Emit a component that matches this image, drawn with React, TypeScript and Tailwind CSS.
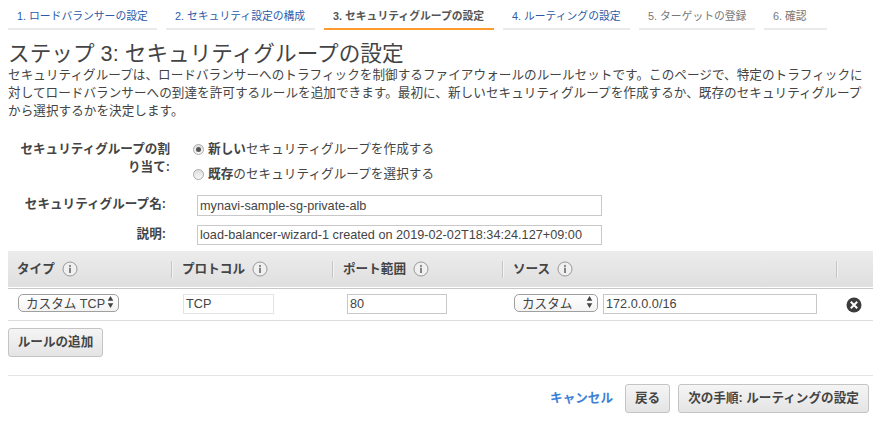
import type { ReactNode } from 'react';

const steps = [
  { label: '1. ロードバランサーの設定', box: 'w-[149px] border-[#eaeaea] text-[#2a5aa8]' },
  { label: '2. セキュリティ設定の構成', box: 'w-[149px] border-[#eaeaea] text-[#2a5aa8]' },
  { label: '3. セキュリティグループの設定', box: 'w-[170px] border-[#ff9a2e] font-bold text-[#555]' },
  { label: '4. ルーティングの設定', box: 'w-[127px] border-[#eaeaea] text-[#2a5aa8]' },
  { label: '5. ターゲットの登録', box: 'w-[116px] border-[#eaeaea] text-[#777]' },
  { label: '6. 確認', box: 'w-[63px] border-[#eaeaea] text-[#777]' },
];

function InfoIcon() {
  return (
    <svg width="16" height="16" viewBox="0 0 16 16" className="shrink-0">
      <circle cx="8" cy="8" r="7" fill="#f0f0f0" stroke="#999" strokeWidth="1" />
      <circle cx="8" cy="4.9" r="0.9" fill="#555" />
      <path d="M8 6.8v5.2" stroke="#555" strokeWidth="1.4" />
    </svg>
  );
}

function Radio({ checked = false }: { checked?: boolean }) {
  return (
    <span className="flex size-[11px] shrink-0 items-center justify-center rounded-full border border-[#aaa] bg-linear-to-b from-[#dedede] to-[#f8f8f8]">
      {checked && <span className="size-[5px] rounded-full bg-[#555]" />}
    </span>
  );
}

function Select({ children, className }: { children: ReactNode; className: string }) {
  return (
    <div className={`flex h-[18px] shrink-0 items-center justify-between rounded-[5px] border border-[#a0a0a0] bg-linear-to-b from-white to-[#f3f3f3] pr-[4px] pl-[7px] whitespace-nowrap ${className}`}>
      <span className="pt-0.5">{children}</span>
      <svg width="7" height="12" viewBox="0 0 7 12" className="-mt-0.5 shrink-0">
        <path d="M3.5 0L6.3 4.8H.7zM3.5 12L6.3 7.2H.7z" fill="#444" />
      </svg>
    </div>
  );
}

function Field({ children, className }: { children: ReactNode; className: string }) {
  return <div className={`flex shrink-0 items-center border bg-white pl-0.5 text-[12.7px] whitespace-nowrap ${className}`}>{children}</div>;
}

function Head({ label, className }: { label: string; className: string }) {
  return (
    <div className={`flex shrink-0 items-center gap-[7px] ${className}`}>
      {label}
      <InfoIcon />
    </div>
  );
}

function Divider() {
  return <span className="h-[17px] w-0.5 shrink-0 border-r border-l border-l-[#c4c4c4] border-r-[#f3f3f3]" />;
}

function Button({ children, className }: { children: ReactNode; className: string }) {
  return (
    <button className={`flex h-[29px] shrink-0 items-center justify-center rounded-[3px] border border-[#c4c4c4] bg-linear-to-b from-[#f5f5f5] to-[#e4e4e4] pb-0.5 font-bold whitespace-nowrap ${className}`}>
      {children}
    </button>
  );
}

export default function App() {
  return (
    <div className="h-[421px] w-[879px] overflow-hidden bg-white pl-2 font-['Liberation_Sans','Noto_Sans_CJK_JP',sans-serif] text-[12.6px] leading-[18px] text-[#444]">
      <nav className="flex h-[30px] gap-[9px]">
        {steps.map((s) => (
          <div key={s.label} className={`shrink-0 border-b-2 pt-[7px] pl-[9px] text-[10.8px] whitespace-nowrap ${s.box}`}>
            {s.label}
          </div>
        ))}
      </nav>

      <h1 className="mt-2.5 h-[26px] text-[21.6px] leading-[28px] tracking-[0.05px] whitespace-nowrap">ステップ 3: セキュリティグループの設定</h1>
      <p className="h-[54px] tracking-[0.035px] whitespace-nowrap">
        セキュリティグループは、ロードバランサーへのトラフィックを制御するファイアウォールのルールセットです。このページで、特定のトラフィックに
        <br />
        対してロードバランサーへの到達を許可するルールを追加できます。最初に、新しいセキュリティグループを作成するか、既存のセキュリティグループ
        <br />
        から選択するかを決定します。
      </p>

      <div className="mt-5 flex h-[55px]">
        <div className="w-[162px] text-right font-bold">
          セキュリティグループの割
          <br />
          り当て:
        </div>
        <div className="ml-[23px] flex flex-col gap-[7px] tracking-[0.05px]">
          <label className="flex items-center gap-1 whitespace-nowrap">
            <Radio checked />
            <span><b>新しい</b>セキュリティグループを作成する</span>
          </label>
          <label className="flex items-center gap-1 whitespace-nowrap">
            <Radio />
            <span><b>既存</b>のセキュリティグループを選択する</span>
          </label>
        </div>
      </div>
      <div className="flex h-[30px]">
        <div className="w-[158px] text-right font-bold">セキュリティグループ名:</div>
        <Field className="ml-[31px] h-[21px] w-[405px] border-[#c8c8c8]">mynavi-sample-sg-private-alb</Field>
      </div>
      <div className="flex h-[26px]">
        <div className="w-[158px] text-right font-bold">説明:</div>
        <Field className="ml-[31px] h-5 w-[405px] border-[#c8c8c8]">load-balancer-wizard-1 created on 2019-02-02T18:34:24.127+09:00</Field>
      </div>

      <div className="w-[865px]">
        <div className="flex h-9 items-center bg-linear-to-b from-[#ececec] to-[#dfdfdf] font-bold">
          <Head label="タイプ" className="w-[163px] pl-[9px]" />
          <Divider />
          <Head label="プロトコル" className="w-[159px] pl-[9px]" />
          <Divider />
          <Head label="ポート範囲" className="w-[168px] pl-[9px]" />
          <Divider />
          <Head label="ソース" className="w-[332px] pl-[9px]" />
          <Divider />
        </div>
        <div className="mt-px h-px bg-[#c8c8c8]" />
        <div className="flex h-8 items-start border-b border-[#ddd] pt-[5px]">
          <Select className="ml-2.5 w-[101px]">カスタム TCP</Select>
          <Field className="ml-16 h-5 w-[91px] border-[#e3e3e3]">TCP</Field>
          <Field className="ml-[73px] h-5 w-[100px] border-[#c8c8c8]">80</Field>
          <Select className="ml-[67px] w-[84px]">カスタム</Select>
          <Field className="ml-[5px] h-5 w-[214px] border-[#c8c8c8]">172.0.0.0/16</Field>
          <svg width="16" height="16" viewBox="0 0 16 16" className="mt-[3px] ml-[29px] shrink-0">
            <circle cx="8" cy="8" r="7.5" fill="#3c3c3c" />
            <path d="M4.8 4.8l6.4 6.4M11.2 4.8l-6.4 6.4" stroke="white" strokeWidth="2" />
          </svg>
        </div>
      </div>

      <Button className="mt-[7px] w-[95px]">ルールの追加</Button>

      <div className="mt-[18px] flex w-[865px] items-start justify-end border-t border-[#e4e4e4] pt-2 pr-1">
        <a className="mt-[5px] mr-3 font-bold text-[#3c80d8]">キャンセル</a>
        <Button className="mr-2 w-[45px]">戻る</Button>
        <Button className="w-[191px]">次の手順: ルーティングの設定</Button>
      </div>
    </div>
  );
}
